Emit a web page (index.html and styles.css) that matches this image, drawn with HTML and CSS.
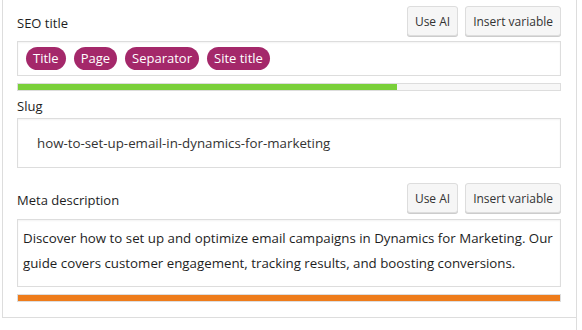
FILE: index.html
```html
<!DOCTYPE html>
<html lang="en">
<head>
    <meta charset="UTF-8">
    <title>SEO fields</title>
    <link rel="stylesheet" href="styles.css">
</head>
<body>
    <div class="frame">
        <div class="panel">
            <div class="field-head">
                <label class="field-label">SEO title</label>
                <div class="actions">
                    <button class="btn">Use AI</button>
                    <button class="btn">Insert variable</button>
                </div>
            </div>
            <div class="title-input">
                <span class="pill">Title</span>
                <span class="pill">Page</span>
                <span class="pill">Separator</span>
                <span class="pill">Site title</span>
            </div>
            <div class="progress">
                <div class="progress-fill good" style="width: 70%"></div>
            </div>

            <label class="field-label slug-label">Slug</label>
            <div class="slug-input">how-to-set-up-email-in-dynamics-for-marketing</div>

            <div class="field-head meta-head">
                <label class="field-label">Meta description</label>
                <div class="actions">
                    <button class="btn">Use AI</button>
                    <button class="btn">Insert variable</button>
                </div>
            </div>
            <div class="meta-input">Discover how to set up and optimize email campaigns in Dynamics for Marketing. Our guide covers customer engagement, tracking results, and boosting conversions.</div>
            <div class="progress">
                <div class="progress-fill warn" style="width: 100%"></div>
            </div>
        </div>
    </div>
</body>
</html>
```

FILE: styles.css
```css
body {
    margin: 0;
    font-family: "Open Sans", "Noto Sans", Arial, sans-serif;
    font-size: 13px;
    color: #1e1e1e;
    background: #fff;
}

.frame {
    width: 576px;
    min-height: 100vh;
    border-right: 1px solid #ddd;
}

.panel {
    margin-left: 2px;
    padding: 6px 15px 15px 14px;
    border-left: 1px solid #ddd;
    border-bottom: 1px solid #ddd;
}

.field-head {
    display: flex;
    align-items: center;
    justify-content: space-between;
}

.field-label {
    display: block;
    line-height: 18px;
}

.field-head .field-label {
    margin-top: 4px;
}

.actions {
    display: flex;
    gap: 7px;
}

.btn {
    height: 30px;
    padding: 0 7px;
    font-family: inherit;
    font-size: 12px;
    color: #333;
    background: #f6f6f6;
    border: 1px solid #ddd;
    border-radius: 3px;
    box-shadow: 0 1px 0 #ccc;
    cursor: pointer;
}

.title-input {
    display: flex;
    gap: 8px;
    height: 23px;
    margin-top: 5px;
    padding: 5px 8px;
    border: 1px solid #ddd;
    box-shadow: inset 0 1px 2px rgba(0,0,0,0.05);
}

.pill {
    display: flex;
    align-items: center;
    padding: 0 7px;
    border-radius: 12px;
    background: #a4286a;
    color: #fff;
    line-height: 23px;
}

.progress {
    height: 6px;
    margin-top: 7px;
    border: 1px solid #ddd;
    background: #f7f7f7;
}

.progress-fill {
    height: 100%;
}

.progress-fill.good {
    background: #7ad03a;
}

.progress-fill.warn {
    background: #ee7c1b;
}

.slug-label {
    margin-top: 6px;
}

.slug-input {
    height: 48px;
    margin-top: 3px;
    padding: 0 19px;
    display: flex;
    align-items: center;
    border: 1px solid #ddd;
    font-size: 13.3px;
    color: #333;
    box-shadow: inset 0 1px 2px rgba(0,0,0,0.05);
}

.meta-head {
    margin-top: 15px;
}

.meta-input {
    height: 55px;
    margin-top: 6px;
    padding: 6px 5px 5px 5px;
    border: 1px solid #ddd;
    font-size: 13.3px;
    line-height: 25px;
    color: #1e1e1e;
    box-shadow: inset 0 1px 2px rgba(0,0,0,0.05);
}
```
